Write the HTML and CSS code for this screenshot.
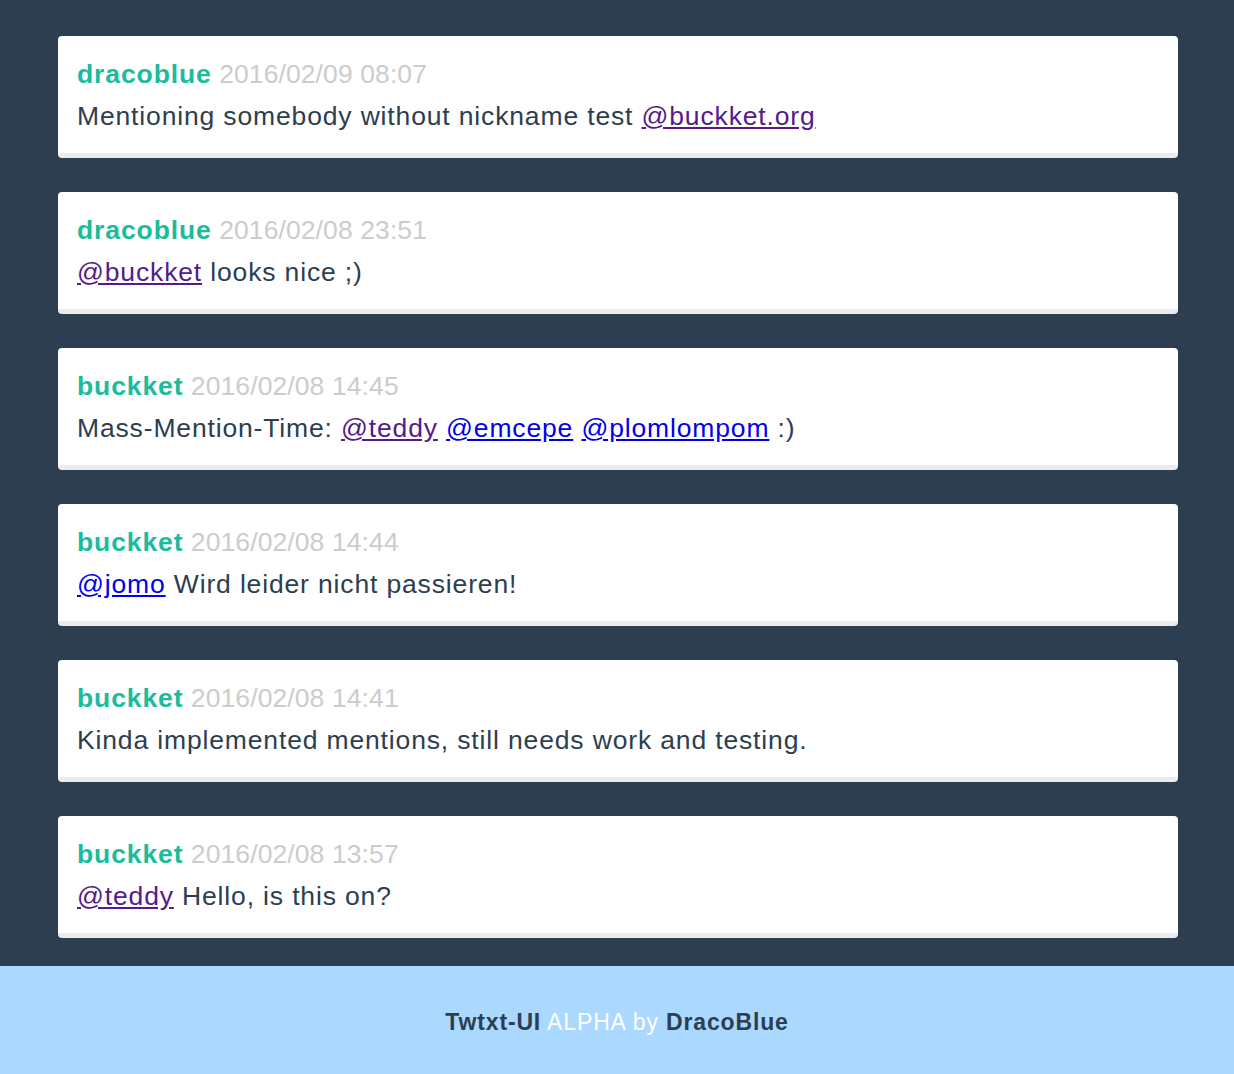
FILE: index.html
```html
<!DOCTYPE html>
<html>
<head>
<meta charset="utf-8">
<link rel="stylesheet" href="styles.css">
</head>
<body>
<main class="feed">
  <article class="post">
    <div class="meta"><span class="nick">dracoblue</span> <span class="time">2016/02/09 08:07</span></div>
    <div class="text">Mentioning somebody without nickname test <a class="visited" href="#">@buckket.org</a></div>
  </article>
  <article class="post">
    <div class="meta"><span class="nick">dracoblue</span> <span class="time">2016/02/08 23:51</span></div>
    <div class="text"><a class="visited" href="#">@buckket</a> looks nice ;)</div>
  </article>
  <article class="post">
    <div class="meta"><span class="nick">buckket</span> <span class="time">2016/02/08 14:45</span></div>
    <div class="text">Mass-Mention-Time: <a class="visited" href="#">@teddy</a> <a class="link" href="#">@emcepe</a> <a class="link" href="#">@plomlompom</a> :)</div>
  </article>
  <article class="post">
    <div class="meta"><span class="nick">buckket</span> <span class="time">2016/02/08 14:44</span></div>
    <div class="text"><a class="link" href="#">@jomo</a> Wird leider nicht passieren!</div>
  </article>
  <article class="post">
    <div class="meta"><span class="nick">buckket</span> <span class="time">2016/02/08 14:41</span></div>
    <div class="text">Kinda implemented mentions, still needs work and testing.</div>
  </article>
  <article class="post">
    <div class="meta"><span class="nick">buckket</span> <span class="time">2016/02/08 13:57</span></div>
    <div class="text"><a class="visited" href="#">@teddy</a> Hello, is this on?</div>
  </article>
</main>
<footer class="footer">
  <p class="credit"><strong class="dark">Twtxt-UI</strong> <span class="light">ALPHA by</span> <strong class="dark">DracoBlue</strong></p>
</footer>
</body>
</html>
```

FILE: styles.css
```css
html, body {
  margin: 0;
  padding: 0;
}
body {
  background: #2c3e50;
  font-family: "Liberation Sans", Arial, sans-serif;
  color: #2c3e50;
}
.feed {
  padding: 36px 56px 28px 58px;
  display: flex;
  flex-direction: column;
  gap: 34px;
}
.post {
  background: #fff;
  border-radius: 4px;
  border-bottom: 5px solid #ececec;
  padding: 17px 20px 16px 19px;
  font-size: 26.5px;
  line-height: 42px;
}
.nick {
  color: #1abc9c;
  font-weight: bold;
  letter-spacing: 0.9px;
}
.time {
  color: #cccccc;
  letter-spacing: 0.1px;
}
.text {
  color: #2c3e50;
  letter-spacing: 0.85px;
}
.visited {
  color: #551a8b;
}
.link {
  color: #0000ee;
}
.footer {
  background: #aad8ff;
  height: 108px;
  display: flex;
  align-items: center;
  justify-content: center;
  font-size: 23px;
}
.credit {
  margin: 4px 0 0 0;
  letter-spacing: 0.85px;
}
.dark {
  color: #2c3e50;
}
.light {
  color: #fff;
}
```
